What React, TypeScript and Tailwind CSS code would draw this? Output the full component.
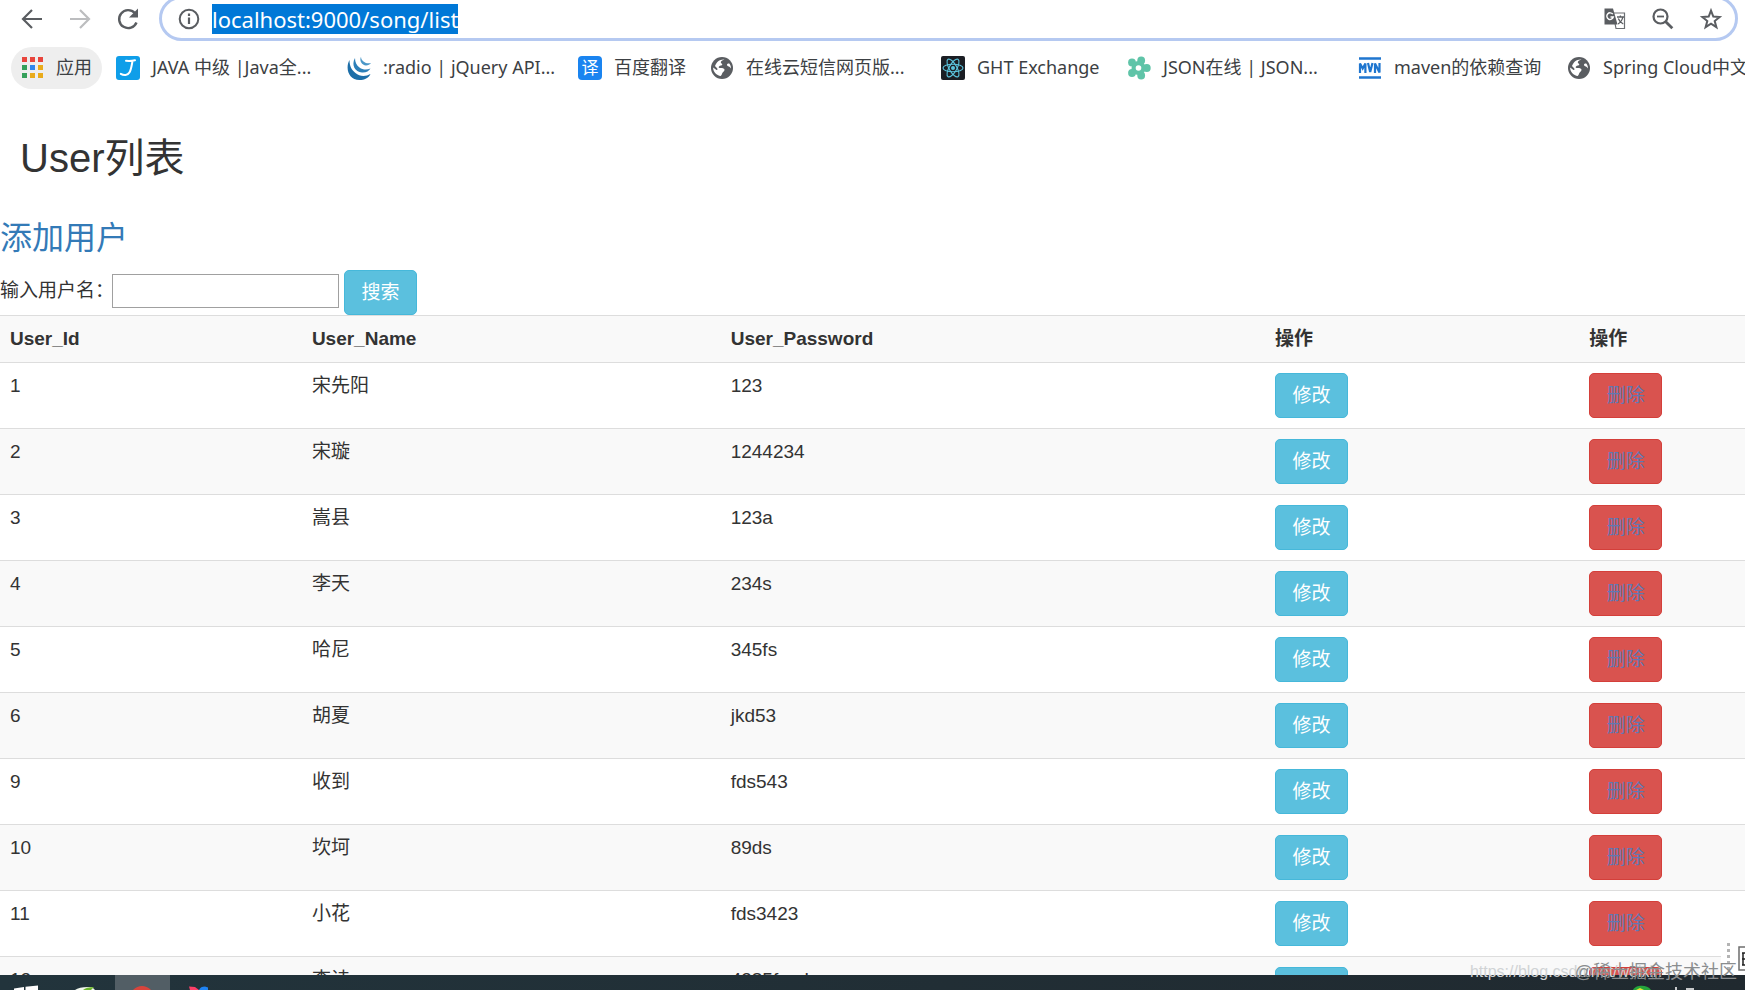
import { useEffect, useRef, type ReactNode } from "react";

const users = [
  { id: 1, name: "宋先阳", password: "123" },
  { id: 2, name: "宋璇", password: "1244234" },
  { id: 3, name: "嵩县", password: "123a" },
  { id: 4, name: "李天", password: "234s" },
  { id: 5, name: "哈尼", password: "345fs" },
  { id: 6, name: "胡夏", password: "jkd53" },
  { id: 9, name: "收到", password: "fds543" },
  { id: 10, name: "坎坷", password: "89ds" },
  { id: 11, name: "小花", password: "fds3423" },
  { id: 12, name: "李诗", password: "4385fsad" },
];

function GlobeIcon() {
  return (
    <svg viewBox="0 0 24 24" className="size-6" aria-hidden="true">
      <circle cx="12" cy="12" r="11" fill="#5a5d61" />
      <path
        d="M14.500 3.500c-1.500.6-3.500 1-3.700 2.700-.1 1.300 1.700 1.200 1.500 2.400-.2 1.400-2.300.9-3.300 1.800-.6.600-.3 1.400.6 1.500 1.600.2 3.800-.3 4.700 1.200.8 1.500-.7 2.500-1.600 3.500-.8 1-.7 2.300-1.900 3.500-4.300-.6-7.600-4-7.700-8.500l3.400 2.300c.9.5 1.200-.4.8-1.300-.6-1.200-1.500-1.800-2.300-2.700C6.500 6 9.800 3 14.500 3.500z"
        fill="#fff"
      />
      <path d="M19.300 7.500c-1.300-.3-2.400.3-2.300 1.400.2 1.200 1.800 1.200 2.700 2 .6.600.9 1.100 1.200 1.700.2-1.900-.3-3.600-1.600-5.100z" fill="#fff" />
    </svg>
  );
}

function JavaIcon() {
  return (
    <svg viewBox="0 0 24 24" className="size-6" aria-hidden="true">
      <rect width="24" height="24" rx="3" fill="#0f9ee9" />
      <path d="M10 4.800c3 .3 6 .2 9-.6M16.600 4.800c-.9 4-1.300 8.500-3.200 11.800-1.700 3-5.600 3.200-8.600 1.200" fill="none" stroke="#fff" strokeWidth="2" strokeLinecap="round" />
    </svg>
  );
}

function JQueryIcon() {
  return (
    <svg viewBox="0 0 24 24" className="size-6" aria-hidden="true">
      <path d="M2.500 4C-2 12 1.500 24 12.500 24c5 0 9-2 11-6-5 2.800-11 2.500-15-1C4.500 14 2.500 10 2.500 4z" fill="#1c6ea8" />
      <path d="M8 2C4 9 8 16 15 16.500c4 .3 7-1.500 8.500-4-4 1.800-8 1.200-11-1C9.500 9.500 8 6 8 2z" fill="#2c7fb8" />
      <path d="M14 .8c-2 4.200 1 8.500 5 8.700 2 0 4-1 5-2.500-3 .6-5.500.1-7.500-1.600C15 4.200 14 3 14 .8z" fill="#4a97c8" />
    </svg>
  );
}

function TranslateBadge() {
  return (
    <span className="flex size-6 items-center justify-center rounded bg-[#1a84f0] text-[17px] leading-6 text-white">
      译
    </span>
  );
}

function ReactIcon() {
  return (
    <svg viewBox="0 0 24 24" className="size-6" fill="none" aria-hidden="true">
      <rect width="24" height="24" rx="2" fill="#1b1e24" />
      <g stroke="#5cc4dd" strokeWidth="1.100">
        <ellipse cx="12" cy="12" rx="10" ry="3.800" />
        <ellipse cx="12" cy="12" rx="10" ry="3.800" transform="rotate(60 12 12)" />
        <ellipse cx="12" cy="12" rx="10" ry="3.800" transform="rotate(120 12 12)" />
      </g>
      <circle cx="12" cy="12" r="2" fill="#5cc4dd" />
    </svg>
  );
}

function FlowerIcon() {
  return (
    <svg viewBox="0 0 24 24" className="size-6" aria-hidden="true">
      <g fill="#5fc4a8">
        <circle cx="19.800" cy="12" r="3.900" />
        <circle cx="14.200" cy="19.500" r="3.900" />
        <circle cx="5" cy="17" r="3.900" />
        <circle cx="5" cy="6.500" r="3.900" />
        <circle cx="14.200" cy="4.500" r="3.900" />
        <circle cx="11.500" cy="12" r="7" />
      </g>
      <circle cx="11.500" cy="12" r="2.800" fill="#fff" />
    </svg>
  );
}

function MavenIcon() {
  return (
    <svg viewBox="0 0 24 24" className="size-6" fill="none" stroke="#1f76cf" aria-hidden="true">
      <path d="M1 2.500h22M1 21.500h22" strokeWidth="2.600" />
      <path d="M2 17V7.500l2.700 5 2.700-5V17M10 7l2.200 9L14.500 7M17 17V7.500l4.500 9V7" strokeWidth="2.200" />
    </svg>
  );
}

function AppsIcon() {
  const colors = ["#e8453c", "#e8453c", "#e8453c", "#34a05a", "#2f86ee", "#e9ab1b", "#34a05a", "#e9ab1b", "#e9ab1b"];
  return (
    <svg viewBox="0 0 21 21" className="size-[21px]" aria-hidden="true">
      {colors.map((c, i) => (
        <rect key={i} x={(i % 3) * 8} y={Math.floor(i / 3) * 8} width="5" height="5" fill={c} />
      ))}
    </svg>
  );
}

const bookmarks: { label: string; icon: ReactNode; width: string }[] = [
  { label: "JAVA 中级 |Java全...", icon: <JavaIcon />, width: "w-[231px]" },
  { label: ":radio | jQuery API...", icon: <JQueryIcon />, width: "w-[231px]" },
  { label: "百度翻译", icon: <TranslateBadge />, width: "w-[132px]" },
  { label: "在线云短信网页版...", icon: <GlobeIcon />, width: "w-[231px]" },
  { label: "GHT Exchange", icon: <ReactIcon />, width: "w-[186px]" },
  { label: "JSON在线 | JSON...", icon: <FlowerIcon />, width: "w-[231px]" },
  { label: "maven的依赖查询", icon: <MavenIcon />, width: "w-[209px]" },
  { label: "Spring Cloud中文", icon: <GlobeIcon />, width: "w-[231px]" },
];

function BrowserChrome() {
  const address = useRef<HTMLInputElement>(null);
  useEffect(() => {
    address.current?.focus();
    address.current?.select();
  }, []);

  return (
    <header className="shrink-0 font-['Noto_Sans','Noto_Sans_CJK_SC',sans-serif]">
      <div className="flex h-[41px] items-end overflow-hidden pr-[7px] pl-5">
        <nav className="flex h-[45px] shrink-0 items-center gap-6 pr-[19px] text-[#5a5d61]">
          <button type="button" aria-label="Back" className="size-6">
            <svg viewBox="0 0 24 24" className="size-6" fill="none" stroke="currentColor" strokeWidth="2.200">
              <path d="M22 12H3.500M12 3l-9 9 9 9" />
            </svg>
          </button>
          <button type="button" aria-label="Forward" className="size-6 text-[#bcbdbf]">
            <svg viewBox="0 0 24 24" className="size-6" fill="none" stroke="currentColor" strokeWidth="2.200">
              <path d="M2 12h18.500M12 3l9 9-9 9" />
            </svg>
          </button>
          <button type="button" aria-label="Reload" className="size-6">
            <svg viewBox="0 0 24 24" className="size-6" fill="none" stroke="currentColor" strokeWidth="2.400">
              <path d="M20.500 15.500A9 9 0 1 1 18.800 6" />
              <path d="M22 1.500v9h-9z" fill="currentColor" stroke="none" />
            </svg>
          </button>
        </nav>
        <div className="flex h-[45px] min-w-0 flex-1 items-center rounded-full border-[3px] border-[#b5c9f1] pr-3 pl-4 text-[#5a5d61]">
          <svg viewBox="0 0 24 24" className="size-6 shrink-0" fill="none" stroke="currentColor" strokeWidth="2" aria-hidden="true">
            <circle cx="11" cy="12" r="9.300" />
            <path d="M11 10.500V17M11 6.500V9" strokeWidth="2.200" />
          </svg>
          <input
            ref={address}
            type="text"
            aria-label="Address"
            defaultValue="localhost:9000/song/list"
            className="ml-2.5 h-[30px] min-w-0 flex-1 text-[22px] leading-[30px] text-[#202124] outline-none selection:bg-[#0078d7] selection:text-white"
          />
          <div className="flex gap-6">
            <button type="button" aria-label="Translate" className="size-6">
              <svg viewBox="0 0 24 24" className="size-6" fill="none">
                <path d="M10 6h11.500v15.500H13z" stroke="#6c6f73" strokeWidth="1.200" />
                <path d="M1.500 1.500h8.500l4.500 16H1.500z" fill="#5a5d61" />
                <path d="M9.800 7.200A3.300 3.300 0 1 0 10.300 10H7.500" stroke="#fff" strokeWidth="1.400" />
                <path d="M14 10h7M17.400 8.500V10M19.800 10c-.5 3-2.300 5.500-4.800 7M15.300 11.500c.9 2.500 2.500 4.400 5 5.500" stroke="#5a5d61" strokeWidth="1.300" />
              </svg>
            </button>
            <button type="button" aria-label="Zoom out" className="size-6">
              <svg viewBox="0 0 24 24" className="size-6" fill="none" stroke="currentColor" strokeWidth="2.200">
                <circle cx="9.500" cy="9.500" r="7" />
                <path d="M6 9.500h7" strokeWidth="1.800" />
                <path d="M14.500 14.500l6.800 6.800" strokeWidth="2.800" />
              </svg>
            </button>
            <button type="button" aria-label="Bookmark this page" className="size-6">
              <svg viewBox="0 0 24 24" className="size-6" fill="none" stroke="currentColor" strokeWidth="2">
                <path d="M12 3.600l2.300 6 6.300.4-4.900 4 1.700 6.200-5.400-3.500-5.400 3.500 1.700-6.200-4.900-4 6.300-.4z" />
              </svg>
            </button>
          </div>
        </div>
      </div>
      <div className="mt-1 flex h-[45px] items-center overflow-hidden pl-[11px] text-[18px] text-[#3c4043]">
        <button type="button" className="mr-3.5 flex h-[42px] shrink-0 items-center gap-[13px] rounded-full bg-[#eeeeee] pr-2.5 pl-[11px]">
          <AppsIcon />
          <span>应用</span>
        </button>
        {bookmarks.map((b) => (
          <a key={b.label} href="#" className={`flex shrink-0 items-center gap-3 whitespace-nowrap ${b.width}`}>
            <span className="size-6 shrink-0">{b.icon}</span>
            <span>{b.label}</span>
          </a>
        ))}
      </div>
    </header>
  );
}

const cell = "border-t border-[#dddddd] px-2.5 py-2.5 text-left align-top";

function UserPage() {
  return (
    <main className="min-h-0 flex-1 overflow-hidden text-[19px] leading-[26px] text-[#333333]">
      <h1 className="px-5 pt-[46px] text-[40px] leading-[44px]">User列表</h1>
      <a href="#" className="mt-9 block w-fit text-[32px] leading-[44px] text-[#337ab7]">
        添加用户
      </a>
      <form className="mt-2.5 flex items-start" onSubmit={(e) => e.preventDefault()}>
        <label htmlFor="username" className="w-28 leading-[42px] whitespace-nowrap">
          输入用户名：
        </label>
        <input id="username" type="text" className="mt-1 h-[34px] w-[227px] border border-[#a0a0a0] px-1" />
        <button type="submit" className="ml-[5px] h-[45px] w-[73px] rounded-[5px] border border-[#46b8da] bg-[#5bc0de] text-white">
          搜索
        </button>
      </form>
      <table className="w-full table-fixed border-separate border-spacing-0">
        <colgroup>
          <col className="w-[17.300%]" />
          <col className="w-[24%]" />
          <col className="w-[31.200%]" />
          <col className="w-[18%]" />
          <col />
        </colgroup>
        <thead>
          <tr className="bg-[#f9f9f9]">
            {["User_Id", "User_Name", "User_Password", "操作", "操作"].map((h, i) => (
              <th key={i} className={`${cell} font-bold`}>
                {h}
              </th>
            ))}
          </tr>
        </thead>
        <tbody>
          {users.map((u) => (
            <tr key={u.id} className="even:bg-[#f9f9f9]">
              <td className={cell}>{u.id}</td>
              <td className={cell}>{u.name}</td>
              <td className={cell}>{u.password}</td>
              <td className={cell}>
                <button type="button" className="block h-[45px] w-[73px] rounded-[5px] border border-[#46b8da] bg-[#5bc0de] text-white">
                  修改
                </button>
              </td>
              <td className={cell}>
                <button type="button" className="block h-[45px] w-[73px] rounded-[5px] border border-[#d43f3a] bg-[#d9534f] text-[#5f78b4]">
                  删除
                </button>
              </td>
            </tr>
          ))}
        </tbody>
      </table>
    </main>
  );
}

function Taskbar() {
  return (
    <footer className="flex h-[15px] shrink-0 items-end overflow-hidden bg-linear-to-r from-[#22343c] to-[#20292f]">
      <svg viewBox="0 0 55 15" className="h-[15px] w-[55px]" aria-hidden="true">
        <path d="M14 13.500l10-1.500v3H14zM25.500 11.800L38 10.500V15H25.500z" fill="#fff" />
      </svg>
      <svg viewBox="0 0 60 15" className="h-[15px] w-[60px]" aria-hidden="true">
        <path d="M20 15c3-2.500 9-3.500 17-3l3 3z" fill="#f2f7ee" />
        <path d="M28 15c2-2 6-3 11-3l-3 3z" fill="#6cb52d" />
      </svg>
      <div className="h-[15px] w-[55px] bg-[#525e65]">
        <svg viewBox="0 0 55 15" className="h-[15px] w-[55px]" aria-hidden="true">
          <circle cx="27" cy="23" r="12" fill="#d8443c" />
        </svg>
      </div>
      <svg viewBox="0 0 60 15" className="h-[15px] w-[60px]" aria-hidden="true">
        <path d="M19 11.500l6 .5 4 3H20z" fill="#fb3f68" />
        <path d="M29 15c1-2.500 3-3.500 6-3.500l3 1V15z" fill="#1f83f2" />
      </svg>
      <svg viewBox="0 0 112 15" className="ml-auto h-[15px] w-28" aria-hidden="true">
        <path d="M0 15c2-5 14-6 18 0z" fill="#25a53c" />
        <path d="M3 15l4-2 4 2z" fill="#e9e23a" />
        <path d="M43 12v3M53 14h8" stroke="#fff" strokeWidth="1.500" />
      </svg>
    </footer>
  );
}

function InputMethodBar() {
  return (
    <div className="absolute right-0 bottom-[15px] h-[34px] w-6 bg-white">
      <svg viewBox="0 0 24 34" className="h-[34px] w-6" fill="none" aria-hidden="true">
        <path d="M7.500 2v29" stroke="#b4b4b4" strokeWidth="3" strokeDasharray="3 3" />
        <path d="M24 6h-6v23h6" stroke="#6e6e6e" strokeWidth="1.500" />
        <path d="M21 12h3M21 18h3M21 24h3M22 12v12" stroke="#222" strokeWidth="1.500" />
      </svg>
    </div>
  );
}

function Watermark() {
  return (
    <div className="pointer-events-none absolute right-2 bottom-2 h-5 leading-5 whitespace-nowrap">
      <span className="absolute right-[75px] text-[16px] text-[#d0d3d5]">https://blog.csdn.net/weixin</span>
      <span className="relative text-[18px] text-[#8a8d8f]">@稀土掘金技术社区</span>
    </div>
  );
}

export default function App() {
  return (
    <div className="relative flex h-screen flex-col overflow-hidden bg-white font-['Liberation_Sans','Noto_Sans_CJK_SC',sans-serif]">
      <BrowserChrome />
      <UserPage />
      <Taskbar />
      <InputMethodBar />
      <Watermark />
    </div>
  );
}
